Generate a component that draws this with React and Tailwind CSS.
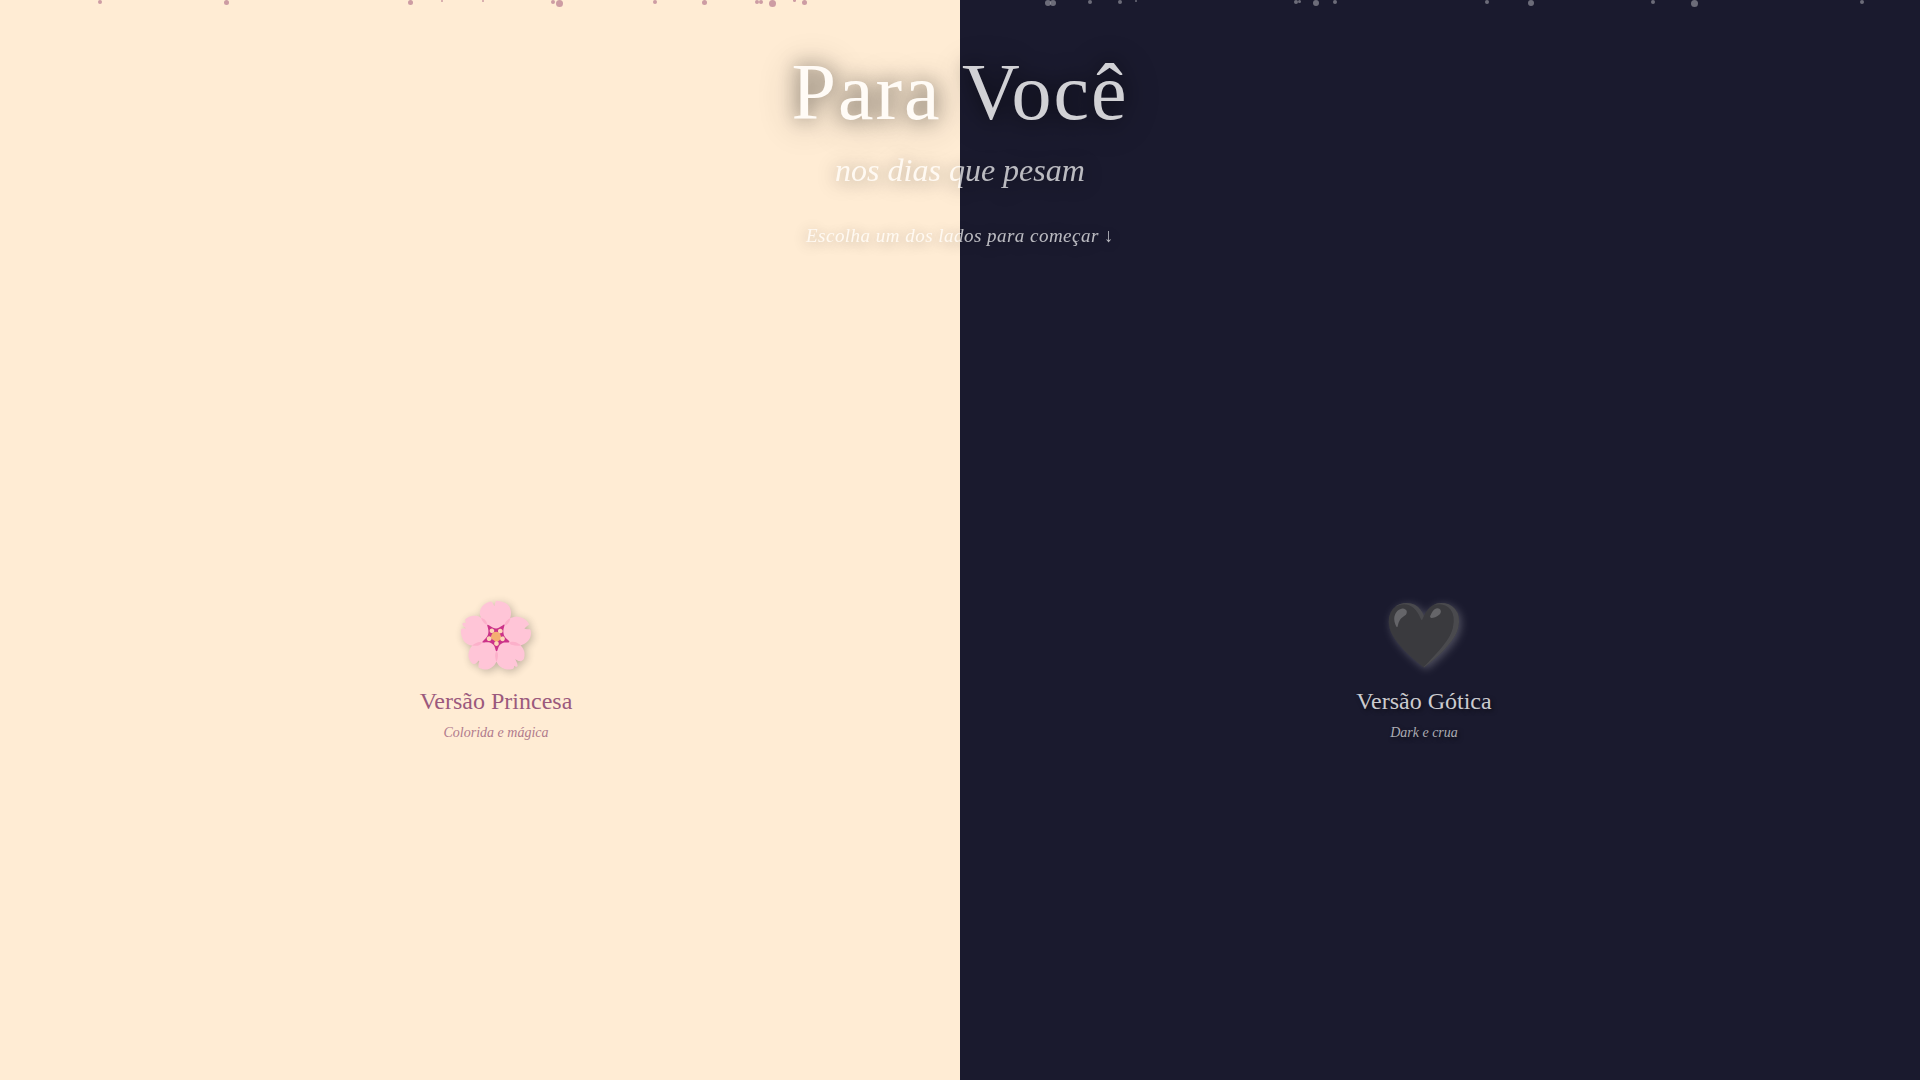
import React from 'react';

const petals = [
  { x: 98, y: 0, size: 4 },
  { x: 224, y: 0, size: 5 },
  { x: 408, y: 0, size: 5 },
  { x: 441, y: 0, size: 2 },
  { x: 482, y: 0, size: 2 },
  { x: 551, y: 0, size: 4 },
  { x: 556, y: 0, size: 7 },
  { x: 653, y: 0, size: 4 },
  { x: 702, y: 0, size: 5 },
  { x: 755, y: 0, size: 4 },
  { x: 759, y: 0, size: 4 },
  { x: 769, y: 0, size: 7 },
  { x: 793, y: -1, size: 3 },
  { x: 802, y: 0, size: 5 },
];

const ashes = [
  { x: 1045, y: 0, size: 6 },
  { x: 1050, y: 0, size: 6 },
  { x: 1088, y: 0, size: 4 },
  { x: 1118, y: 0, size: 4 },
  { x: 1135, y: 0, size: 2 },
  { x: 1294, y: 0, size: 4 },
  { x: 1298, y: 0, size: 3 },
  { x: 1313, y: 0, size: 6 },
  { x: 1333, y: 0, size: 4 },
  { x: 1485, y: 0, size: 4 },
  { x: 1528, y: 0, size: 6 },
  { x: 1651, y: 0, size: 4 },
  { x: 1691, y: 0, size: 7 },
  { x: 1860, y: 0, size: 4 },
];

const Particles = ({ items, color }) =>
  items.map(({ x, y, size }) => (
    <span
      key={x}
      className={`absolute rounded-full ${color}`}
      style={{
        left: `${(x / 1920) * 100}%`,
        top: y,
        width: size,
        height: size,
      }}
    />
  ));

const App = () => {
  return (
    <main className="relative min-h-screen overflow-hidden font-['Liberation_Serif',serif]">
      <div className="grid min-h-screen grid-cols-2">
        <button
          type="button"
          className="flex cursor-pointer flex-col items-center justify-center bg-[#ffecd4] pt-[262px] pl-8"
        >
          <span className="mb-3 text-[64px] leading-[74px] opacity-80 drop-shadow-[2px_2px_4px_rgba(0,0,0,0.3)]">
            🌸
          </span>
          <span className="text-2xl text-[#9b597d]">Versão Princesa</span>
          <span className="mt-1.5 text-sm text-[#b07a8c] italic">
            Colorida e mágica
          </span>
        </button>

        <button
          type="button"
          className="flex cursor-pointer flex-col items-center justify-center bg-[#1a1a2e] pt-[262px] pr-8"
        >
          <span className="mb-3 text-[64px] leading-[74px] opacity-80 drop-shadow-[2px_2px_4px_rgba(255,255,255,0.3)]">
            🖤
          </span>
          <span className="text-2xl text-[#cbcbcf] text-shadow-[2px_2px_4px_rgba(0,0,0,0.5)]">
            Versão Gótica
          </span>
          <span className="mt-1.5 text-sm text-[#acacb3] italic text-shadow-[2px_2px_4px_rgba(0,0,0,0.5)]">
            Dark e crua
          </span>
        </button>
      </div>

      <div className="pointer-events-none absolute inset-0">
        <Particles items={petals} color="bg-[#cd9ca3]" />
        <Particles items={ashes} color="bg-[#a3a3ab]/60" />
      </div>

      <header className="pointer-events-none absolute inset-x-0 top-0 flex flex-col items-center pt-12 text-center text-white">
        <h1 className="text-[80px] leading-[88px] tracking-[2px] opacity-80 text-shadow-[0_0_20px_rgba(0,0,0,0.7),0_4px_40px_rgba(0,0,0,0.5)]">
          Para Você
        </h1>
        <p className="mt-4 text-[32px] leading-9 italic opacity-70 text-shadow-[0_2px_20px_rgba(0,0,0,0.7)]">
          nos dias que pesam
        </p>
        <p className="mt-9 text-[19px] leading-6 tracking-wide italic opacity-70 text-shadow-[0_2px_15px_rgba(0,0,0,0.6)]">
          Escolha um dos lados para começar ↓
        </p>
      </header>
    </main>
  );
};

export default App;
